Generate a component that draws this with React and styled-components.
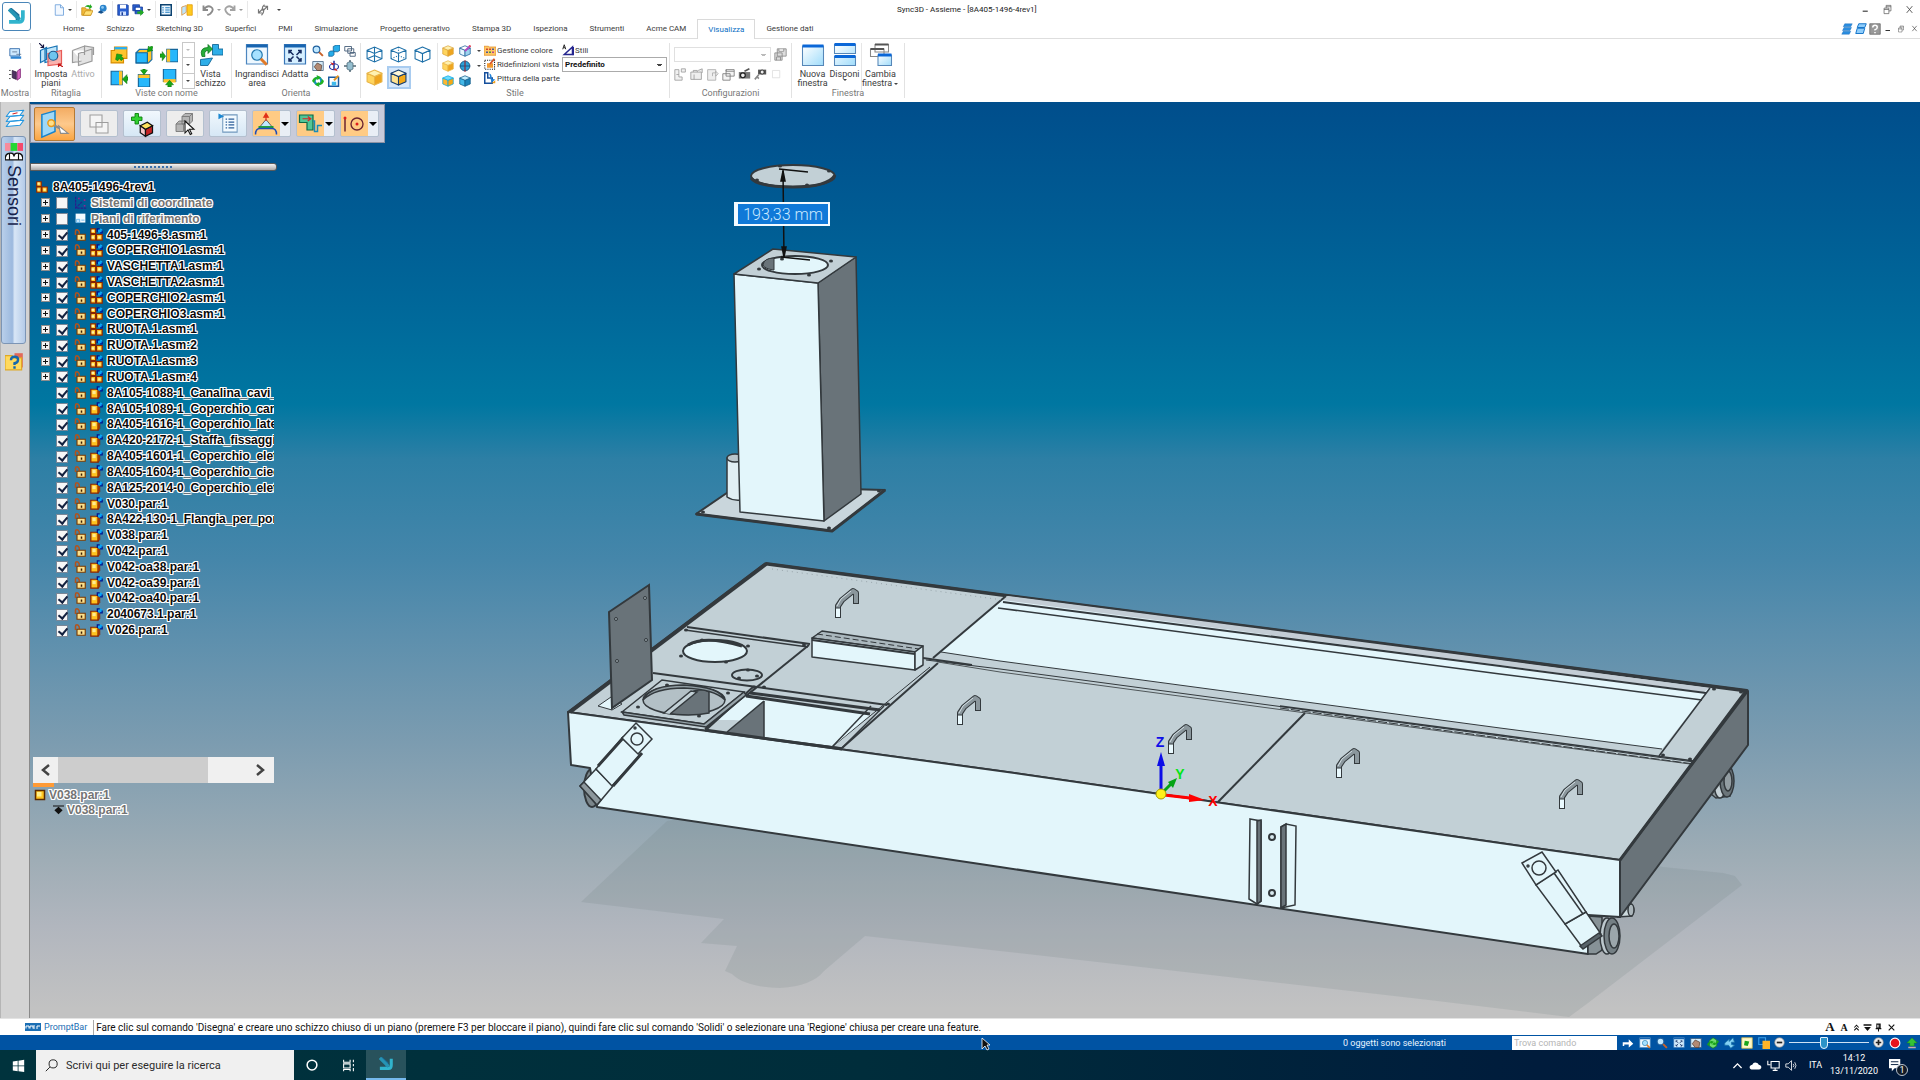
import React, { useState } from 'react';
import styled, { createGlobalStyle, css } from 'styled-components';

const GlobalStyle = createGlobalStyle`
  * {
    box-sizing: border-box;
  }
  body {
    margin: 0;
    font-family: Roboto, 'Open Sans', sans-serif;
    font-size: 9px;
    color: #3b3b3b;
    background: #fff;
  }
  button, input, select {
    font: inherit;
    color: inherit;
  }
  button {
    padding: 0;
    border: 0;
    background: none;
  }
  svg {
    display: block;
    flex: none;
  }
`;

/* ---------- icons ---------- */

const isoCube = (fill, top, side, stroke) => (
  <g stroke={stroke} strokeLinejoin="round">
    <path d="M1 4l7 3v8l-7-3z" fill={fill} />
    <path d="M8 7l7-3v8l-7 3z" fill={side} />
    <path d="M1 4l7-3 7 3-7 3z" fill={top} />
  </g>
);

const lens = (
  <>
    <circle cx="6" cy="6" r="4.500" fill="#bfe7ff" stroke="#1d5f9e" strokeWidth="1.500" />
    <path d="M9.500 9.500l5 5" stroke="#c8622a" strokeWidth="2.500" />
  </>
);

const floppy = (
  <>
    <path d="M1 1h13l1 1v13H1z" fill="#2a5fd0" stroke="#173c96" />
    <path d="M4 1h8v5H4z" fill="#fff" />
    <path d="M4 10h8v5H4z" fill="#cfe0ff" />
    <path d="M6 11h2v4H6z" fill="#173c96" />
  </>
);

const blocks = (
  <>
    <path d="M1 1h6v6H1zM1 8h6v7H1zM8 8h7v7H8z" fill="#ffc629" stroke="#8a2500" strokeWidth="1.500" />
    <path d="M2 2h3v3H2zM2 10h3v3H2zM10 10h3v3h-3z" fill="#fff0a8" />
  </>
);

const blueLink = (
  <>
    <circle cx="12.500" cy="3.500" r="3" fill="#0aa5f5" />
    <path d="M9 5V1h3M15 3v3h-3" fill="none" stroke="#00138c" strokeWidth="1.500" />
  </>
);

const arrow = (d) => <path d={d} fill="#18a818" stroke="#087508" strokeWidth=".5" />;

const ICONS = {
  logo: (
    <g fill="none" strokeWidth="3.500">
      <path d="M2 1l7 6v6" stroke="#1c6c96" />
      <path d="M1 13h10q3 0 3-4V2" stroke="#31b4cd" />
      <path d="M1 1l10 10" stroke="#2694b4" />
    </g>
  ),
  new: <path d="M3 1h7l4 4v10H3zM10 1v4h4" fill="#f2f8ff" stroke="#5c95d6" />,
  open: (
    <>
      <path d="M1 5h5l1 2h6v8H1z" fill="#f0b93a" stroke="#c48a14" />
      <path d="M3 15l3-6h10l-3 6z" fill="#ffdf73" stroke="#c48a14" />
      <path d="M5 4q3-4 7-2V0l3 4-4 3V4.500Q8 3 5 4z" fill="#22aa22" />
    </>
  ),
  pin: (
    <>
      <circle cx="9" cy="6" r="5" fill="#2a83cc" />
      <circle cx="8" cy="5" r="2" fill="#8ac7f2" />
      <path d="M5 9l-4 3 5 2 4-2z" fill="#14508c" />
    </>
  ),
  save: floppy,
  saveAs: (
    <>
      <path d="M1 1h9v8H1zM4 4h10v9H4z" fill="#2a5fd0" stroke="#173c96" />
      <path d="M5 5h6v3H5z" fill="#fff" />
      <path d="M7 10h4V7l5 4-5 5v-3H7z" fill="#22aa22" />
    </>
  ),
  list: (
    <>
      <path d="M1 1h14v14H1z" fill="#eaf6ff" stroke="#0b4270" strokeWidth="2" />
      <path d="M3 5h2M3 8h2M3 11h2M7 5h6M7 8h6M7 11h6" stroke="#1c7bbf" strokeWidth="1.500" />
    </>
  ),
  door: (
    <>
      <path d="M8 1h7v14H8z" fill="#ffca1f" stroke="#e09500" />
      <path d="M1 4l6-2v9l-6 4z" fill="#bfe4fb" stroke="#d98c2d" />
    </>
  ),
  undo: <path d="M2 2v6h6M2 8Q7 1 12 4t-1 9l-4 2" fill="none" stroke="#8b8b8b" strokeWidth="2.500" />,
  redo: <path d="M14 2v6H8M14 8Q9 1 4 4t1 9l4 2" fill="none" stroke="#a3a3a3" strokeWidth="2.500" />,
  refresh: (
    <path
      d="M2 7v5h5M2 12l5-5q2-1 2 2t-3 6M14 8V3H9M14 3L9 8Q7 9 7 6t3-5"
      fill="none"
      stroke="#777"
      strokeWidth="1.600"
    />
  ),
  showA: (
    <>
      <path d="M1 2h12v9H1z" fill="#cce8ff" stroke="#2763a5" />
      <path d="M2 13h13" stroke="#2d84d3" strokeWidth="3" />
      <path d="M4 6h6M9 9h6" stroke="#5b718d" />
    </>
  ),
  showB: (
    <>
      <path d="M4 3l5 2v9l-5-2z" fill="#4e3263" stroke="#33203f" />
      <path d="M10 4l4-3v11l-4 3z" fill="#d763c3" stroke="#7c2274" />
      <path d="M0 3h2M0 8h3M0 13h2" stroke="#333" />
    </>
  ),
  clip: (
    <>
      <path d="M1 5l4-2v8l-4 2zM4 4l8-2v9l-8 2z" fill="#bfe6fb" stroke="#1773b4" strokeWidth=".8" />
      <path d="M6 7l9-2v9l-9 1z" fill="#f8a6a0" fillOpacity=".85" stroke="#e85a56" strokeWidth=".8" />
      <circle cx="9.500" cy="8.500" r="3" fill="#6fc5ee" stroke="#1c5d91" strokeWidth=".8" />
      <path d="M0 0l3 3M3 1v2H1" stroke="#151540" strokeWidth=".8" fill="none" />
      <path d="M16 16l-3-2M13 16v-2h2" stroke="#c01414" strokeWidth=".8" fill="none" />
    </>
  ),
  active: (
    <path
      d="M1 5l8-3v3M1 5v8l6-1M5 7l9-3v8l-9 3zM9 8V2l6 1v5"
      fill="#e3e3e3"
      stroke="#9a9a9a"
      strokeWidth=".8"
    />
  ),
  viewTop: (
    <>
      <path d="M4 1h11v10h-3v4H1V4h3z" fill="#ffc42c" stroke="#d88c00" />
      <path d="M4 1h11v2H4z" fill="#1eafff" />
      {arrow('M5 12l1-5 5 1-1 1 2 2-2 2-2-2-1 2z')}
    </>
  ),
  viewIso: (
    <>
      <path d="M1 6l3-3h11v9l-3 3H1z" fill="#ffc42c" stroke="#1c6fa8" />
      <path d="M1 6h10v9H1z" fill="#26b7fb" stroke="#13659b" />
      {arrow('M11 5l1-5 1 1 2-1 1 1-1 2 1 1z')}
    </>
  ),
  viewLeft: (
    <>
      <path d="M6 3h10v11H6z" fill="#26b7fb" stroke="#13659b" />
      <path d="M6 3h3v11H6z" fill="#ffc42c" />
      {arrow('M0 7h2V5l3 4-3 4v-3H0z')}
    </>
  ),
  viewRight: (
    <>
      <path d="M1 2h10v12H1z" fill="#26b7fb" stroke="#13659b" />
      <path d="M8 2h3v12H8z" fill="#ffc42c" />
      {arrow('M16 7h-1V5l-4 4 4 4v-3h1z')}
    </>
  ),
  viewBack: (
    <>
      <path d="M3 5h10v11H3z" fill="#26b7fb" stroke="#13659b" />
      <path d="M3 5h10v3H3z" fill="#ffc42c" />
      {arrow('M7 0h2v1h2L8 5 5 1h2z')}
    </>
  ),
  viewBottom: (
    <>
      <path d="M3 0h11v11H3z" fill="#26b7fb" stroke="#13659b" />
      <path d="M3 9h11v3H3z" fill="#ffc42c" />
      {arrow('M7 16h3v-2h2l-3.500-4L5 14h2z')}
    </>
  ),
  sketchView: (
    <>
      <path d="M9 1h4v3h3v4H9zM1 11l8-1-3 5H1z" fill="#2eaee8" stroke="#156999" strokeWidth=".6" />
      <path d="M2 9Q0 3 6 3V1l3 3-3 3V5Q3 5 4 9z" fill="#25ae38" stroke="#0a701b" strokeWidth=".5" />
    </>
  ),
  zoomArea: (
    <>
      <path d="M1 1h14v13H1z" fill="#eef8ff" stroke="#4c86bf" strokeWidth=".8" />
      <path d="M1 1h14v2H1z" fill="#1764b0" />
      <circle cx="8" cy="8" r="3.500" fill="#a6e1ff" stroke="#2377ae" strokeWidth=".8" />
      <path d="M10.500 10.500l4 4" stroke="#e17a28" strokeWidth="2" />
    </>
  ),
  fit: (
    <>
      <path d="M1 1h14v13H1z" fill="#d5efff" stroke="#3976b7" strokeWidth=".8" />
      <path d="M1 1h14v2H1z" fill="#1764b0" />
      <path d="M4 7V5h2M10 5h2v2M12 10v2h-2M6 12H4v-2M4 5l3 3M12 5L9 8M4 12l3-3M12 12L9 9" fill="none" stroke="#172d61" />
    </>
  ),
  lens,
  cubes: (
    <>
      <path d="M7 2l4-2h5v7l-3 2H7z" fill="#27adea" stroke="#135c8e" />
      <path d="M1 10l2-2h5v5l-2 2H1z" fill="#27adea" stroke="#135c8e" />
    </>
  ),
  pan: <path d="M1 2h9v6H1zM5 5h8v6H5zM8 10h7v5H8z" fill="#fff" stroke="#47607a" strokeWidth="1.200" />,
  hand: (
    <>
      <path d="M1 2h14v12H1z" fill="#d4ebf8" stroke="#3a5a7a" />
      <path d="M3 9l4-5 6 3-1 7H7z" fill="#b28a73" stroke="#5a4238" />
    </>
  ),
  orbit: (
    <>
      <path d="M8 1v12" stroke="#1b2c9d" strokeWidth="2" />
      <ellipse cx="8" cy="9" rx="6" ry="4" fill="none" stroke="#1b2c9d" strokeWidth="1.500" />
      <path d="M3 3l6 2-3 2zM13 15l-6-2 3-2z" fill="#d62727" />
    </>
  ),
  rotate: (
    <>
      <path d="M4 4l4-2 4 2v8l-4 2-4-2z" fill="#96bfd0" stroke="#4b6877" />
      <path d="M8 0v3M8 13v3M0 8h4M12 8h4" stroke="#526a77" strokeWidth="2" />
    </>
  ),
  spin: (
    <>
      <circle cx="8" cy="8" r="4.500" fill="none" stroke="#1590c0" strokeWidth="3" />
      <path d="M0 8q2-6 7-5L6 0l6 3-5 4v-2Q3 6 3 11zM16 8q-2 6-7 5l1 3-6-3 5-4v2q4-1 4-6z" fill="#20b320" />
    </>
  ),
  edit: (
    <>
      <path d="M1 3h13v12H1z" fill="#fff" stroke="#1a5aa0" strokeWidth="2" />
      <path d="M5 9h6v5H5z" fill="#3fb9eb" />
      <path d="M8 7l6-6" stroke="#e09424" strokeWidth="2.500" />
    </>
  ),
  wire: (
    <g fill="none" stroke="#1c6fa8">
      <path d="M1 4l7-3 7 3v8l-7 3-7-3zM1 4l7 3 7-3M8 7v8M8 1v8M1 12l7-3 7 3" />
    </g>
  ),
  wireDash: (
    <g fill="none" stroke="#1c6fa8">
      <path d="M1 4l7-3 7 3v8l-7 3-7-3zM1 4l7 3 7-3M8 7v8" />
      <path d="M8 1v8M1 12l7-3 7 3" strokeDasharray="1 1.500" />
    </g>
  ),
  hidden: isoCube('#fff', '#fff', '#fff', '#1c6fa8'),
  shaded: isoCube('#ffd55e', '#fff1b0', '#eea51f', '#e8b446'),
  shadedEdge: isoCube('#ffe290', '#fff7d6', '#f5a916', '#123b6e'),
  gold: isoCube('#ffd55e', '#fff1b0', '#eea51f', '#dba43c'),
  goldBlue: isoCube('#ffb62e', '#6bdcff', '#f5a916', '#12a7df'),
  blueCube: isoCube('#43b8e8', '#c4efff', '#1c83ba', '#125b88'),
  paintCube: (
    <>
      {isoCube('#e7f7ff', '#fff', '#9cd3ef', '#1c5f98')}
      <path d="M8 8l7-7" stroke="#b04bc2" strokeWidth="2.500" />
      <path d="M13 1l2-1 1 2-1 1z" fill="#ec4545" />
    </>
  ),
  sphere: (
    <>
      <circle cx="8" cy="8" r="6.500" fill="#2da1d8" stroke="#0d416e" />
      <path d="M8 1v14M1 8h14" stroke="#0d416e" />
      <path d="M8 0v16" stroke="#d82020" />
    </>
  ),
  palette: (
    <>
      <path d="M0 3h6l1 1h9v11H0z" fill="#ffc766" stroke="#e28b22" />
      <path d="M3 6h2v2H3zM7 6h2v2H7z" fill="#c11f1f" />
      <path d="M11 6h2v2h-2zM3 10h2v2H3z" fill="#1434a8" />
      <path d="M7 10h2v2H7z" fill="#0c8a2c" />
      <path d="M11 10h2v2h-2z" fill="#9b1ba5" />
    </>
  ),
  override: (
    <>
      <path d="M1 3h13v12H1z" fill="none" stroke="#222" strokeWidth="1.500" strokeDasharray="1.500 1.500" />
      <path d="M4 7h8v6H4z" fill="#f29a30" />
      <path d="M8 8l6-7" stroke="#d8552a" strokeWidth="2.500" />
    </>
  ),
  paint: (
    <>
      <path d="M1 1h4v7h6v7H1z" fill="#fff" stroke="#154f9c" strokeWidth="2" />
      <path d="M7 2q4 1 3 7l5 1-5 4z" fill="#1e7fd6" />
      <path d="M10 15l5-4v4z" fill="#f0a020" />
    </>
  ),
  styles: (
    <>
      <path d="M1 7l2-6 2 6M2 5h2" fill="none" stroke="#222" strokeWidth="1.300" />
      <path d="M3 14L14 4v10z" fill="#fff" stroke="#26278f" strokeWidth="2" />
      <path d="M15 4v11" stroke="#26278f" strokeWidth="2" />
    </>
  ),
  floppyGrey: <path d="M4 1h11v9H4zM1 6h9v9H1zM6 1v3h6V1M3 15v-4h5v4" fill="#ddd" stroke="#888" />,
  cfg1: <path d="M1 2v13h9v-4H6V2zM9 1h5v4H9zM3 8h3" fill="#f1f1f1" stroke="#9b9b9b" />,
  cfg2: <path d="M1 5h13v9H1zM4 5V3h5v2M10 3l5-2v5M5 8v6" fill="#eee" stroke="#999" />,
  cfg3: <path d="M2 2h10v13H2zM8 10V6h4V4l3 3-3 3V8" fill="#eee" stroke="#aaa" />,
  cfg4: <path d="M5 2h10v8H5zM1 7h9v8H1zM5 2v2h10" fill="#f4f4f4" stroke="#777" />,
  cfg5: (
    <>
      <path d="M1 5h14v8H1z" fill="#777" />
      <circle cx="6" cy="9" r="3" fill="#eee" stroke="#222" strokeWidth="1.500" />
      <path d="M8 4l6-3" stroke="#555" strokeWidth="2" />
    </>
  ),
  cfg6: (
    <>
      <path d="M5 2h10v6H5z" fill="#555" />
      <circle cx="10" cy="5" r="2.500" fill="#eee" stroke="#222" />
      <path d="M6 8l-5 6M4 11l2 2" stroke="#888" strokeWidth="2" />
    </>
  ),
  cfg7: <path d="M3 3h9v9H3z" fill="#fff" stroke="#ddd" />,
  windowNew: (
    <>
      <path d="M1 2h14v13H1z" fill="url(#glass)" stroke="#5687b8" strokeWidth=".7" />
      <path d="M1 1h14v2H1z" fill="#0a67d8" />
    </>
  ),
  windowTile: (
    <>
      <path d="M1 1h14v6H1zM1 9h14v6H1z" fill="url(#glass)" stroke="#5687b8" strokeWidth=".7" />
      <path d="M1 0h14v2H1zM1 8h14v2H1z" fill="#0a67d8" />
    </>
  ),
  windowSwap: (
    <>
      <path d="M4 1h9v5H4zM1 4h9v5H1z" fill="#fff" stroke="#888" strokeWidth=".7" />
      <path d="M4 1h9M1 4h9" stroke="#555" strokeWidth="1.300" />
      <path d="M6 8h9v7H6z" fill="url(#glass)" stroke="#5687b8" strokeWidth=".7" />
      <path d="M6 7h9v2H6z" fill="#0a67d8" />
    </>
  ),
  restore: <path d="M3 6h7v8H3zM6 6V2h7v8h-3M3 8h7M6 4h7" fill="none" stroke="#555" />,
  close: <path d="M3 2l10 12M13 2L3 14" stroke="#444" strokeWidth="1.500" />,
  minimize: <path d="M3 11h9" stroke="#333" strokeWidth="2" />,
  stackA: <path d="M5 1h10l-2 4H3zM4 6h10l-2 4H2zM3 11h10l-2 4H1z" fill="#2a8de0" stroke="#1060b0" strokeWidth=".5" />,
  stackB: <path d="M5 1h10l-2 5H3zM3 7h10l-2 7H1z" fill="#8fcdfb" stroke="#1473c8" strokeWidth="1.300" />,
  help: (
    <>
      <path d="M1 1h14v14H1z" fill="#999" stroke="#666" />
      <path d="M5 6q0-3 3-3t3 2.500T8 9v1M8 12v1.500" fill="none" stroke="#fff" strokeWidth="2" />
    </>
  ),
  layers: (
    <g fill="#fff" stroke="#2196e0" strokeWidth=".9" strokeLinejoin="round">
      <path d="M4 10l11-1-3 4-11 1z" />
      <path d="M4 6l11-1-3 4-11 1z" />
      <path d="M4 2l11-1-3 4-11 1z" />
      <path d="M6 4l4-1" stroke="#d42626" />
    </g>
  ),
  gauge: (
    <>
      <path d="M0 0h5v7H0z" fill="#f78b9c" />
      <path d="M5 0h6v7H5z" fill="#24d832" />
      <path d="M11 0h5v7h-5z" fill="#f44a6c" />
      <path d="M0 15q0-6 5-6 3 0 3 3 0-3 3-3 5 0 5 6z" fill="#fff" stroke="#111" strokeWidth="1.300" />
      <path d="M4 15V9M12 15V9" stroke="#111" />
    </>
  ),
  folderHelp: (
    <>
      <path d="M8 1h7v12H8z" fill="#e26a5a" />
      <path d="M0 3h6l1 2h7v10H0z" fill="#ffd95e" stroke="#dfa924" />
      <path d="M5 7q0-3 3-3t3 2.500T8 9.500V11M8 12v2" fill="none" stroke="#1668ad" strokeWidth="2" />
    </>
  ),
  asmRoot: blocks,
  asm: (
    <>
      {blocks}
      {blueLink}
    </>
  ),
  part: (
    <>
      <path d="M1 4h9v11H1z" fill="#ffc21f" stroke="#8a2500" strokeWidth="1.500" />
      <path d="M10 5l2 2v6l-2 2z" fill="#c45a00" stroke="#8a2500" />
      <path d="M3 6h4v4H3z" fill="#ffeb92" />
      {blueLink}
    </>
  ),
  partOnly: (
    <>
      <path d="M2 2h12v12H2z" fill="#ffc51f" stroke="#5b2b00" strokeWidth="2" />
      <path d="M4 4h6v6H4z" fill="#ffef8a" />
    </>
  ),
  ground: <path d="M0 2h16v1.500H0zM8 4l6 5-6 6-6-6z" fill="#111" />,
  lock: (
    <>
      <path d="M2 8V3Q2 1 4 1t3 3v3" fill="none" stroke="#b5521a" strokeWidth="2" />
      <path d="M4 7h11v8H4z" fill="#fbe08c" stroke="#7a3a00" strokeWidth="1.500" />
      <path d="M9 10h2v3H9z" fill="#3a1a00" />
    </>
  ),
  coords: (
    <>
      <path d="M2 1v14h13M2 15l8-8" fill="none" stroke="#2a1f8c" strokeWidth="1.500" strokeDasharray="3 1" />
      <path d="M5 3h2M12 5h2M12 12h2" stroke="#9b1b8f" strokeWidth="2" />
    </>
  ),
  planes: (
    <>
      <path d="M2 2h12v11H2z" fill="#f5fbff" />
      <path d="M3 9h4v4H3zM9 10h4" stroke="#5fb3ea" fill="#c3e6fd" />
    </>
  ),
  selectPlane: (
    <>
      <path d="M1 3l7-2v11l-7 3z" fill="#9fd8f7" stroke="#1683cc" strokeWidth=".8" />
      <path d="M6 8l6 3" stroke="#8c8c8c" strokeWidth="1.200" />
      <circle cx="6" cy="7.500" r="1.800" fill="#ffe08a" stroke="#e89a1c" strokeWidth=".8" />
      <path d="M10 9l5 4-4 0z" fill="#fff" stroke="#8c8c8c" strokeWidth=".6" />
    </>
  ),
  copySquares: <path d="M2 2h8v8H2zM6 7h8v7H6z" fill="#f5f5f5" stroke="#9d9d9d" strokeWidth=".7" />,
  addCube: (
    <>
      <path d="M2 4h2V2h2v2h2v2H6v2H4V6H2z" fill="#31d131" stroke="#0c7c0c" strokeWidth=".5" />
      <g stroke="#111" strokeWidth=".7">
        <path d="M7 9l3 2v4l-3-2z" fill="#f6c7c7" />
        <path d="M10 11l4-2v4l-4 2z" fill="#c42323" />
        <path d="M7 9l4-2 3 2-4 2z" fill="#ffe25e" />
      </g>
    </>
  ),
  selectTool: (
    <>
      <path d="M2 8h5v5H2zM2 8l2-2h5l-2 2M6 3l2-2h5v5l-2 2H6zM6 3h5v5M11 3l2-2" fill="#b5b5b5" stroke="#777" strokeWidth=".6" />
      <path d="M8 6v8l2-2 1.500 3 1-.5-1.500-3h3z" fill="#fff" stroke="#111" strokeWidth=".7" />
    </>
  ),
  optionList: (
    <>
      <path d="M4 2h10v12H4z" fill="#f2faff" stroke="#7098bd" strokeWidth=".7" />
      <path d="M6 5h1M6 7h1M6 9h1M6 11h1M8 5h4M8 7h4M8 9h4M8 11h4" stroke="#2d5f9a" strokeWidth=".8" />
      <path d="M1 1l4 2-4 2z" fill="#1c88d2" />
    </>
  ),
  intent: (
    <>
      <path d="M8 5L3 11h10z" fill="#bfe8ff" stroke="#555" strokeWidth=".6" />
      <path d="M3 10h10" fill="none" stroke="#109a2c" strokeWidth="1.200" />
      <path d="M1 15q0-4 3-4h8q3 0 3 4" fill="none" stroke="#1d4cb8" />
      <path d="M8 6V2M6.500 3.500L8 1l1.500 2.500z" stroke="#e03018" fill="#e03018" strokeWidth=".8" />
    </>
  ),
  section: (
    <>
      <path d="M1 2h9v10H6V7H1z" fill="#52c596" stroke="#0c6b48" strokeWidth=".8" />
      <path d="M10 6h1v7h2V9h3" fill="none" stroke="#188cba" />
      <path d="M3 4.500h5M6.500 3l2 1.500-2 1.500" stroke="#d82828" strokeWidth=".8" fill="none" />
    </>
  ),
  centre: (
    <>
      <circle cx="10" cy="8" r="4" fill="none" stroke="#6b2430" strokeWidth=".9" />
      <circle cx="10" cy="8" r="1" fill="#e01d1d" />
      <path d="M2 13V4" stroke="#6b2430" />
      <circle cx="2" cy="4" r="1" fill="#e01d1d" />
    </>
  ),
  promptIcon: (
    <>
      <path d="M0 4h16v8H0z" fill="#1a6eb4" />
      <path d="M1 9.500V7h3v2.500M5 9.500V7h3v2.500M9 10V6M12 10V7h3" fill="none" stroke="#fff" strokeWidth="1" />
    </>
  ),
  doubleUp: <path d="M4 8l4-4 4 4M4 13l4-4 4 4" fill="none" stroke="#111" strokeWidth="1.800" />,
  dropBar: <path d="M1 2h14v3H1zM2 7h12l-6 7z" fill="#111" />,
  pushpin: <path d="M5 2h6v7H5zM3 10h10M8 10v5M9 2v7" fill="none" stroke="#111" strokeWidth="1.800" />,
  closeSmall: <path d="M3 3l10 10M13 3L3 13" stroke="#111" strokeWidth="2" />,
  go: <path d="M1 12V7h8V3l6 6-6 5V10H3v2z" fill="#fff" />,
  greenCube: (
    <>
      <path d="M3 5l5-4 5 3v8l-5 3-5-3z" fill="#6fdc6f" stroke="#0d7a1b" />
      <path d="M0 10q2-4 5-3L4 5l5 1-3 4v-2q-3 0-4 4zM16 6q-2 4-5 3l1 2-5-1 3-4v2q3 0 4-4z" fill="#19a319" />
    </>
  ),
  moveCube: <path d="M1 8l6-5v3l5-5 2 6h-4v3l4 1-5 4-3-4-5 0z" fill="#84d0f4" stroke="#1c74a8" />,
  sheet: (
    <>
      <path d="M1 1h14v14H1z" fill="#fff9c8" stroke="#d9b84a" />
      <path d="M4 11l1-6 6 1-2 6z" fill="#1ba51b" />
    </>
  ),
  overlap: (
    <>
      <path d="M1 1h9v9H1z" fill="none" stroke="#3aa0ea" strokeWidth="1.500" />
      <path d="M6 5h10v11H6z" fill="#ffb429" />
    </>
  ),
  minus: (
    <>
      <circle cx="8" cy="8" r="7" fill="#eee" stroke="#888" />
      <path d="M4 8h8" stroke="#222" strokeWidth="2.500" />
    </>
  ),
  plus: (
    <>
      <circle cx="8" cy="8" r="7" fill="#eee" stroke="#888" />
      <path d="M4 8h8M8 4v8" stroke="#222" strokeWidth="2.500" />
    </>
  ),
  record: <circle cx="8" cy="8" r="6.500" fill="#e8141c" stroke="#fff" strokeWidth="1.500" />,
  upload: (
    <>
      <path d="M8 1l7 7h-4v4H5V8H1z" fill="#35c235" stroke="#0f7d1a" strokeWidth=".6" />
      <path d="M3 14h10" stroke="#c9a9a9" strokeWidth="2" />
    </>
  ),
  windows: <path d="M1 3l6-1v6H1zM8 2l7-1v7H8zM1 9h6v6l-6-1zM8 9h7v7l-7-1z" fill="#fff" />,
  search: (
    <g fill="none" stroke="#222" strokeWidth="1.200">
      <circle cx="10" cy="6" r="5" />
      <path d="M6 10l-5 5" />
    </g>
  ),
  cortana: <circle cx="8" cy="8" r="6.500" fill="none" stroke="#fff" strokeWidth="2" />,
  taskView: <path d="M2 1v3h8V1M2 6h8v5H2zM2 15v-2h8v2M14 1v3M14 6v3M14 11v4" fill="none" stroke="#fff" strokeWidth="1.300" />,
  chevronUp: <path d="M3 11l5-5 5 5" fill="none" stroke="#fff" strokeWidth="1.600" />,
  cloud: <path d="M3 13q-3-1-2-4 1-2 3-2 2-4 6-2 1 0 2 2 4 1 3 4-1 2-3 2z" fill="#fff" />,
  network: <path d="M5 3h10v8H5zM10 11v3M7 14h6M1 2v5h3" fill="none" stroke="#fff" strokeWidth="1.300" />,
  speaker: <path d="M1 6h3l4-4v12L4 10H1zM10 6q2 2 0 4M12 4q3 4 0 8" fill="none" stroke="#fff" />,
  notes: (
    <>
      <path d="M0 1h12v10H6l-3 3v-3H0z" fill="#fff" />
      <path d="M2 4h8M2 7h8" stroke="#01193a" />
    </>
  ),
};

const Icon = ({ name, size = 12 }) => (
  <svg width={size} height={size} viewBox="0 0 16 16" aria-hidden="true">
    {ICONS[name]}
  </svg>
);

/* ---------- header ---------- */

const Page = styled.div`
  position: relative;
  min-height: 100vh;
  display: flex;
  flex-direction: column;
`;

const Gradients = styled.svg`
  position: absolute;
  width: 0;
  height: 0;
`;

const Header = styled.header`
  display: grid;
  grid-template-columns: 52px 1fr auto;
  grid-template-rows: 19px 19px;
  border-bottom: 1px solid #dedede;
`;

const AppButton = styled.button`
  grid-row: 1 / 3;
  align-self: start;
  width: 29px;
  height: 29px;
  margin: 2px;
  display: flex;
  align-items: center;
  justify-content: center;
  border: 1px solid #4a86b8;
  border-radius: 3px;
  background: #fff;
`;

const TitleRow = styled.div`
  display: grid;
  grid-template-columns: 845px 1fr;
  align-items: center;
`;

const QuickAccess = styled.div`
  display: flex;
  align-items: center;
  gap: 1px;
`;

const ToolButton = styled.button`
  display: flex;
  align-items: center;
  justify-content: center;
  width: ${({ $w }) => $w || 13}px;
  height: 15px;
`;

const Caret = styled.span`
  width: 0;
  height: 0;
  margin: 0 1px;
  border: ${({ $size }) => $size || 2}px solid transparent;
  border-top-color: ${({ $color }) => $color || '#444'};
  border-bottom: 0;
`;

const QuickDivider = styled.span`
  width: 1px;
  height: 17px;
  margin: 0 2px;
  background: #e8e8e8;
`;

const Title = styled.h1`
  margin: 0;
  font-size: 8px;
  font-weight: 400;
  line-height: 19px;
  color: #222;
`;

const WindowButtons = styled.div`
  display: flex;
  align-items: center;
  justify-content: flex-end;
  gap: ${({ $gap }) => $gap}px;
  padding-right: ${({ $end }) => $end}px;
`;

const Tabs = styled.nav`
  display: flex;
`;

const Tab = styled.button`
  height: 19px;
  padding: 0 10px;
  font-size: 8px;
  line-height: 18px;
  white-space: nowrap;
  border: 1px solid transparent;
  border-bottom: 0;
  ${({ $active }) =>
    $active &&
    css`
      color: #0c6fc4;
      background: #fff;
      border-color: #dadada;
      margin-bottom: -1px;
      height: 20px;
    `}
`;

/* ---------- ribbon ---------- */

const Ribbon = styled.div`
  display: flex;
  height: 63px;
  padding-top: 2px;
  background: #fff;
`;

const Group = styled.section`
  width: ${({ $w }) => $w}px;
  height: 55px;
  margin-top: 2px;
  display: flex;
  flex-direction: column;
  justify-content: space-between;
  border-right: 1px solid #e2e2e2;
`;

const GroupBody = styled.div`
  display: flex;
  justify-content: center;
  height: 46px;
  gap: ${({ $gap }) => $gap || 0}px;
`;

const GroupName = styled.h2`
  margin: 0;
  font-size: 9px;
  font-weight: 400;
  line-height: 9px;
  text-align: center;
  color: #777;
  white-space: nowrap;
`;

const BigButton = styled.button`
  width: ${({ $w }) => $w || 36}px;
  display: flex;
  flex-direction: column;
  align-items: center;
  justify-content: flex-start;
  gap: 3px;
  line-height: 9px;
  color: ${({ disabled }) => (disabled ? '#aaa' : '#3b3b3b')};
`;

const BigLabel = styled.span`
  display: flex;
  flex-direction: column;
  align-items: center;
  white-space: nowrap;
`;

const LastLine = styled.span`
  display: flex;
  align-items: center;
  gap: 1px;
`;

const IconGrid = styled.div`
  display: grid;
  grid-template-columns: repeat(${({ $cols }) => $cols}, ${({ $cell }) => $cell}px);
  grid-auto-rows: ${({ $row }) => $row}px;
  align-content: start;
  align-items: stretch;
`;

const CaretCell = styled.button`
  display: flex;
  align-items: center;
`;

const CellButton = styled.button`
  display: flex;
  align-items: center;
  justify-content: center;
  ${({ $on }) =>
    $on &&
    css`
      border: 2px solid #a9ccf0;
      background: #d7e8fa;
    `}
`;

const Spinner = styled.div`
  display: flex;
  flex-direction: column;
  width: 13px;
  height: 46px;

  button {
    flex: 1;
    display: flex;
    align-items: center;
    justify-content: center;
    border: 1px solid #c8c8c8;
    margin-top: -1px;
  }
`;

const InnerDivider = styled.span`
  width: 1px;
  height: 47px;
  background: #e6e6e6;
`;

const CommandList = styled.div`
  display: flex;
  flex-direction: column;
`;

const Command = styled.button`
  display: flex;
  align-items: center;
  gap: 1px;
  height: 14px;
  font-size: 8px;
  white-space: nowrap;
`;

const SelectBox = styled.select`
  width: ${({ $w }) => $w}px;
  height: 15px;
  padding: 0 2px;
  border: 1px solid ${({ disabled }) => (disabled ? '#e0e0e0' : '#ababab')};
  border-radius: 0;
  appearance: none;
  color: #111;
  font-size: 8px;
  font-weight: 700;
  background: ${({ disabled }) => {
    const c = disabled ? '#bbb' : '#444';
    return `linear-gradient(${c}, ${c}) right 4px top 6px / 5px 1px no-repeat,
      linear-gradient(${c}, ${c}) right 5px top 7px / 3px 1px no-repeat, #fff`;
  }};
  opacity: 1;
`;

const ConfigRow = styled.div`
  display: flex;
  align-items: center;
  gap: 3px;
  margin-top: ${({ $top }) => $top}px;
`;

/* ---------- viewport ---------- */

const Work = styled.main`
  flex: 1;
  display: flex;
`;

const Rail = styled.aside`
  width: 30px;
  border-right: 1px solid #8a8a8a;
  border-left: 1px solid #b5b5b5;
  background: #d3d3d3;
  display: flex;
  flex-direction: column;
  align-items: flex-start;
`;

const RailButton = styled.button`
  width: 27px;
  height: 34px;
  display: flex;
  align-items: center;
  justify-content: center;
`;

const SensorTab = styled.button`
  width: 25px;
  height: 208px;
  padding: 6px 0;
  display: flex;
  flex-direction: column;
  align-items: center;
  gap: 4px;
  border: 1px solid #7c95b5;
  border-radius: 3px;
  background: linear-gradient(90deg, #b9cfea, #9cb9de 45%, #d8e6f6 55%, #b4cbe8);

  span {
    writing-mode: vertical-rl;
    font: 18px 'Liberation Sans', sans-serif;
    line-height: 20px;
    color: #16234c;
  }
`;

const Viewport = styled.div`
  flex: 1;
  position: relative;
  overflow: hidden;
  background: linear-gradient(
    #004e8c 0%,
    #005b93 12%,
    #006a9b 24%,
    #0077a1 33%,
    #2d7fa5 39%,
    #4586aa 50%,
    #5c8fad 58%,
    #7c9cb0 70%,
    #9dacb5 82%,
    #b1b6be 90%,
    #c2c2c2 99%
  );
`;

const Scene = styled.svg`
  position: absolute;
  inset: 0;
  width: 100%;
  height: 100%;
`;

const DimensionInput = styled.input`
  position: absolute;
  left: 704px;
  top: 100px;
  width: 96px;
  height: 24px;
  border: 2px solid #f4fbff;
  border-left-width: 4px;
  padding: 0;
  background: #1079d8;
  color: #cbe9ff;
  text-align: center;
  font: 300 16px Roboto, sans-serif;
`;

const EdgePanel = styled.div`
  position: relative;
  width: max-content;
`;

const FloatBar = styled.div`
  display: flex;
  align-items: center;
  gap: 5px;
  height: 39px;
  padding: 0 5px 0 3px;
  margin-top: 2px;
  border: 1px solid #8d93a5;
  background: #c8cbda;
`;

const FloatButton = styled.button`
  width: ${({ $on }) => ($on ? 41 : 38)}px;
  height: ${({ $on }) => ($on ? 34 : 27)}px;
  display: flex;
  align-items: center;
  justify-content: center;
  border: 1px solid ${({ $on }) => ($on ? '#b57a35' : '#b4c0cf')};
  border-radius: 2px;
  background: ${({ $on, $grey }) =>
    $on ? 'linear-gradient(#f3ac63, #fdc98c 50%, #fba543)' : $grey ? '#ededed' : 'linear-gradient(#f1f8fd, #d6e7f5)'};
`;

const SplitButton = styled(FloatButton)`
  width: 39px;
  justify-content: space-between;
  background: linear-gradient(90deg, #ffcb84 0 27px, #e9eef5 27px);
  padding-left: 1px;
`;

const Splitter = styled.div`
  width: 247px;
  height: 8px;
  margin-top: 20px;
  display: flex;
  align-items: center;
  justify-content: center;
  border: 1px solid #5b5b5b;
  border-radius: 0 3px 3px 0;
  background: linear-gradient(#f5f5f5, #a9a9a9);

  span {
    width: 40px;
    height: 2px;
    background: repeating-linear-gradient(90deg, #3b6fa9 0 2px, transparent 2px 4px);
  }
`;

const Root = styled.div`
  display: flex;
  align-items: center;
  gap: 5px;
  height: 16px;
  margin-top: 8px;
  padding-left: 6px;
`;

const NodeName = styled.span`
  font-family: 'Liberation Sans', Arial, sans-serif;
  font-size: 12px;
  font-weight: 700;
  line-height: 14px;
  white-space: nowrap;
  color: ${({ $dim }) => ($dim ? '#747474' : '#0a0a0a')};
  text-shadow: 1px 0 #fff, -1px 0 #fff, 0 1px #fff, 0 -1px #fff, 1px 1px #fff, -1px -1px #fff,
    1px -1px #fff, -1px 1px #fff;
`;

const Tree = styled.ul`
  list-style: none;
  margin: 0;
  padding: 0 0 0 11px;
  width: 244px;
  height: 443px;
  overflow: hidden;
  display: grid;
  grid-auto-rows: 1fr;
`;

const Node = styled.li`
  display: grid;
  grid-template-columns: 15px 18px 16px auto;
  align-items: center;
  justify-content: start;

  label {
    display: flex;
    align-items: center;
    gap: 4px;
  }
`;

const Expander = styled.button`
  width: 9px;
  height: 9px;
  border: 1px solid #8d8d8d;
  background: linear-gradient(#111, #111) center / 5px 1px no-repeat,
    linear-gradient(#111, #111) center / 1px 5px no-repeat, #f3f3f3;
`;

const Tick = styled.input`
  appearance: none;
  grid-column: 2;
  width: 12px;
  height: 12px;
  margin: 1px 0 0;
  border: 1px solid #7a8797;
  background: #f7f7f7;

  &:checked::after {
    content: '';
    display: block;
    width: 4px;
    height: 7px;
    margin: 0 3px;
    border: solid #14213f;
    border-width: 0 2px 2px 0;
    transform: rotate(40deg);
  }
`;

const ScrollTrack = styled.div`
  width: 241px;
  height: 26px;
  margin: 119px 0 0 3px;
  display: grid;
  grid-template-columns: 25px 150px 1fr 28px;
  background: #f0f0f0;

  button {
    display: flex;
    align-items: center;
    justify-content: center;
  }
`;

const ScrollThumb = styled.span`
  background: #cdcdcd;
`;

const OrangeMark = styled.div`
  width: 21px;
  height: 4px;
  margin-left: 3px;
  background: #ff9b36;
`;

const SubRow = styled.div`
  display: flex;
  align-items: center;
  gap: 3px;
  height: 15px;
  padding-left: ${({ $indent }) => $indent}px;
`;

/* ---------- bottom bars ---------- */

const PromptBar = styled.div`
  display: flex;
  align-items: center;
  height: 17px;
  padding: 0 23px 0 25px;
  background: #fff;
  border-top: 1px solid #e3e3e3;
  color: #111;
`;

const PromptName = styled.span`
  margin: 0 6px 0 3px;
  color: #1a6eb4;
`;

const PromptText = styled.p`
  flex: 1;
  margin: 0;
  padding-left: 2px;
  border-left: 1px solid #a9a9a9;
  font-size: 10px;
  line-height: 15px;
`;

const PromptTools = styled.div`
  display: flex;
  align-items: center;
  gap: 2px;
`;

const FontButton = styled.button`
  width: 12px;
  font: 700 ${({ $size }) => $size}px 'Liberation Serif', serif;
`;

const StatusBar = styled.div`
  display: flex;
  align-items: center;
  justify-content: flex-end;
  height: 15px;
  padding-right: 2px;
  background: #0053a3;
  color: #eaf3ff;
  gap: 4px;
`;

const Selected = styled.span`
  width: 165px;
`;

const FindInput = styled.input`
  width: 105px;
  height: 14px;
  padding: 0 2px;
  border: 0;
  background: #fff;

  &::placeholder {
    color: #b5b5b5;
  }
`;

const ZoomRange = styled.input`
  width: 80px;
  height: 13px;
  margin: 0;
  appearance: none;
  background: linear-gradient(#cfe2f5, #cfe2f5) center / 100% 1px no-repeat;

  &::-webkit-slider-thumb {
    appearance: none;
    width: 8px;
    height: 12px;
    border: 1px solid #e5f4ff;
    border-radius: 1px 1px 4px 4px;
    background: #2b93c8;
  }
`;

const Taskbar = styled.footer`
  display: flex;
  align-items: center;
  height: 30px;
  color: #fff;
  background: linear-gradient(90deg, #00333d, #002d3b 45%, #001c3c 80%, #001a3e);
`;

const TaskButton = styled.button`
  width: ${({ $on }) => ($on ? 40 : 36)}px;
  height: 30px;
  display: flex;
  align-items: center;
  justify-content: center;
  background: ${({ $on }) => ($on ? '#28525c' : 'none')};
  border-bottom: ${({ $on }) => ($on ? '2px solid #76b9ed' : '0')};
`;

const TaskSearch = styled.label`
  width: 258px;
  height: 30px;
  display: flex;
  align-items: center;
  gap: 8px;
  padding: 0 9px;
  background: #f0f0f0;

  input {
    flex: 1;
    min-width: 0;
    border: 0;
    padding: 0;
    background: none;
    font-size: 11px;
  }
  input::placeholder {
    color: #2b2b2b;
    opacity: 1;
  }
`;

const Tray = styled.div`
  margin-left: auto;
  display: flex;
  align-items: center;
  gap: 5px;
  padding-right: 14px;
`;

const Language = styled.span`
  width: 16px;
  margin-left: 6px;
`;

const Clock = styled.time`
  width: 48px;
  margin-right: 6px;
  text-align: center;
  line-height: 13px;
`;

const NoteButton = styled.button`
  position: relative;
  width: 17px;
  height: 17px;
`;

const Badge = styled.span`
  position: absolute;
  right: -2px;
  bottom: -2px;
  width: 12px;
  height: 12px;
  border: 1px solid #b8c2cf;
  border-radius: 50%;
  background: #111a26;
  line-height: 10px;
  color: #fff;
`;

const Pointer = styled.svg`
  position: absolute;
  left: 981px;
  bottom: 29px;
`;

/* ---------- data ---------- */

const TABS = [
  'Home', 'Schizzo', 'Sketching 3D', 'Superfici', 'PMI', 'Simulazione', 'Progetto generativo',
  'Stampa 3D', 'Ispeziona', 'Strumenti', 'Acme CAM', 'Visualizza', 'Gestione dati',
];

const ASSEMBLIES = [
  '405-1496-3.asm:1', 'COPERCHIO1.asm:1', 'VASCHETTA1.asm:1', 'VASCHETTA2.asm:1', 'COPERCHIO2.asm:1',
  'COPERCHIO3.asm:1', 'RUOTA.1.asm:1', 'RUOTA.1.asm:2', 'RUOTA.1.asm:3', 'RUOTA.1.asm:4',
];

const PARTS = [
  '8A105-1088-1_Canalina_cavi_', '8A105-1089-1_Coperchio_can', '8A405-1616-1_Coperchio_late',
  '8A420-2172-1_Staffa_fissaggi', '8A405-1601-1_Coperchio_elet', '8A405-1604-1_Coperchio_ciec',
  '8A125-2014-0_Coperchio_elet', 'V030.par:1', '8A422-130-1_Flangia_per_por', 'V038.par:1', 'V042.par:1',
  'V042-oa38.par:1', 'V042-oa39.par:1', 'V042-oa40.par:1', '2040673.1.par:1', 'V026.par:1',
];

const NODES = [
  { name: 'Sistemi di coordinate', icon: 'coords', ref: true, open: true },
  { name: 'Piani di riferimento', icon: 'planes', ref: true, open: true },
  ...ASSEMBLIES.map((name) => ({ name, icon: 'asm', open: true })),
  ...PARTS.map((name) => ({ name, icon: 'part' })),
];

/* ---------- model ---------- */

const TOP = '#c2d0d6';
const LIGHT = '#e3f6fb';
const DARK = '#697379';
const EDGE = '#33393d';

const Handle = ({ x, y }) => (
  <g transform={`translate(${x} ${y})`} fill="none" strokeLinejoin="round">
    <path d="M0 0V-12L4 -18L15 -27L18 -25V-14" stroke={EDGE} strokeWidth="6" />
    <path d="M0 -1V-12L4 -18L15 -27L18 -25V-15" stroke="#8b979d" strokeWidth="4" />
    <path d="M0 -1V-10" stroke="#eafaff" strokeWidth="4" />
    <path d="M-1 -12L3 -19L13 -27" stroke="#d3dfe4" strokeWidth="1" />
    <path d="M-2 -10H2" stroke={EDGE} />
  </g>
);

const Bolt = ({ x, y }) => <ellipse cx={x} cy={y} rx="2" ry="1.500" fill={EDGE} />;

const Model = () => (
  <Scene viewBox="30 102 1890 916" preserveAspectRatio="xMidYMid slice">
    {/* floor shadow */}
    <path
      d="M667 821L581 902L724 919L701 943L737 946L725 971L732 974Q745 987 780 988Q812 986 824 971L865 936L1080 960L1429 1000L1569 1017L1588 1003L1742 885L1735 876L1723 873L1663 867L1300 780L900 780Z"
      fill="#697c7c"
      fillOpacity=".17"
    />

    {/* rear wheel, front wheel and peg */}
    <g stroke={EDGE} strokeWidth="1.500">
      <path d="M1706 790L1730 764V796L1716 798Z" fill="#8a9499" />
      <ellipse cx="1720" cy="784" rx="6" ry="14" fill="#c5d0d5" />
      <ellipse cx="1727" cy="781" rx="7" ry="16" fill="#6b757a" />
      <ellipse cx="1728" cy="781" rx="4" ry="10" fill="#939da2" />
      <path d="M1618 909L1631 904Q1636 910 1632 916L1618 917Z" fill="#cddade" />
      <ellipse cx="1631" cy="910" rx="3" ry="6" fill="#aab5ba" />
    </g>

    {/* left corner wheel */}
    <ellipse cx="592" cy="788" rx="8" ry="19" fill="#7b868b" stroke={EDGE} strokeWidth="2" />

    {/* box faces */}
    <g stroke={EDGE} strokeWidth="2" strokeLinejoin="round">
      <path d="M568 712L766 563L1000 594L1500 658L1747 690L1620 860L1500 843L1000 771Z" fill={TOP} />
      <path d="M1620 860L1748 691V745L1620 917Z" fill={DARK} />
      <path d="M568 712L1000 771L1500 843L1620 860V917L1588 915V954L1000 867L597 807L590 768L571 765Z" fill={LIGHT} />
    </g>
    <path d="M570 712L766 564" fill="none" stroke={EDGE} strokeWidth="4" />
    <path d="M766 564L1000 595L1500 659L1746 691L1620 860" fill="none" stroke={EDGE} strokeWidth="3" />

    {/* big tank */}
    <path d="M1005 596L1500 661L1709 689L1662 749L1500 728L1000 661L941 652Z" fill={LIGHT} />
    <path d="M1008 596L1500 660L1709 688L1704 692L1500 665L1002 600Z" fill="#c3cdd5" />
    <g fill="none" stroke={EDGE} strokeWidth="2">
      <path d="M1003 602L1500 666L1706 693" />
      <path d="M998 608L1500 674L1702 700" strokeWidth="1.500" />
      <path d="M1006 596L933 658" />
      <path d="M941 652L1000 661L1500 728L1662 749" strokeWidth="1" />
      <path d="M926 660L1000 669L1500 736L1694 762" strokeWidth="1" />
      <path d="M938 662L1000 672L1500 739L1690 764" strokeWidth="1" stroke="#4f5659" />
      <path d="M1280 706L1500 735L1694 761" strokeWidth="1.500" />
      <path d="M1280 708L1500 738L1694 764" strokeWidth="1" strokeDasharray="9 2" />
      <path d="M1710 688L1659 756" strokeWidth="1.500" />
    </g>
    <Bolt x="1714" y="689" />
    <Bolt x="1741" y="692" />
    <Bolt x="1663" y="755" />
    <Bolt x="1690" y="759" />

    {/* covers */}
    <g fill="none" stroke={EDGE} strokeWidth="2">
      <path d="M687 627L810 644" />
      <path d="M685 630L808 647" strokeWidth="1.500" />
      <path d="M923 658L972 665" />
      <path d="M809 645L705 729" />
      <path d="M938 663L842 748" />
      <path d="M930 667L832 747" strokeWidth="1" />
      <path d="M1305 713L1218 802" />
      <path d="M653 673L757 687L887 705" />
      <path d="M750 693L880 710" strokeWidth="3" />
      <path d="M772 569L1003 600" strokeWidth="1" stroke="#98a5ab" strokeDasharray="1 4" />
    </g>

    {/* compartment opening */}
    <path d="M746 696L871 714L832 747L707 729Z" fill={LIGHT} />
    <path d="M734 720L748 721L727 732L707 729L716 720Z" fill={TOP} />
    <path d="M764 701V739L727 732Z" fill={DARK} />
    <g fill="none" stroke={EDGE} strokeWidth="1.500">
      <path d="M764 701V738L842 748" />
      <path d="M764 701L727 732" />
      <path d="M746 696L870 714" strokeWidth="3" />
      <path d="M753 687L707 729" strokeWidth="2" />
      <path d="M871 706L832 747" />
      <path d="M884 706L842 748" />
      <path d="M705 730L842 749" strokeWidth="3" />
    </g>

    {/* round openings */}
    <ellipse cx="715" cy="651" rx="32" ry="11" fill={LIGHT} stroke={EDGE} strokeWidth="2" />
    <path d="M688 645Q705 635 742 646" fill="none" stroke={EDGE} strokeWidth="3" />
    <ellipse cx="747" cy="675" rx="15" ry="5.500" fill={TOP} stroke={EDGE} strokeWidth="2" />
    {[[686, 630], [804, 645], [702, 640], [748, 646], [681, 656], [726, 662], [739, 678], [757, 676], [748, 670], [754, 687], [764, 687], [888, 704]].map(
      ([x, y]) => (
        <Bolt key={`${x}-${y}`} x={x} y={y} />
      ),
    )}
    <g stroke={EDGE} strokeWidth="1.500">
      <path d="M622 712L662 680L744 692L704 724Z" fill={TOP} />
      <path d="M622 712L704 724L744 692L746 695L706 727L624 715Z" fill="#98a5ab" />
      <ellipse cx="684" cy="700" rx="41" ry="14.500" fill="#b3c0c6" />
      <path d="M664 713L694 691Q705 688 709 692V713Q690 717 664 713Z" fill={DARK} />
      <path d="M664 713L691 691L697 692L670 714" fill="#c2d0d6" />
      <path d="M643 700Q650 685 684 685Q720 687 725 700Q714 689 684 688Q655 688 643 700Z" fill="#8f9ca2" />
    </g>
    <Bolt x="667" y="685" />
    <Bolt x="728" y="693" />
    <Bolt x="638" y="707" />
    <Bolt x="699" y="716" />

    {/* upright plate */}
    <path d="M598 706L611 697L622 704L612 710Z" fill={LIGHT} stroke={EDGE} />
    <path d="M609 612L649 585L652 680L612 708Z" fill={DARK} stroke={EDGE} strokeWidth="2" />
    {[[645, 598], [616, 619], [646, 640], [617, 661]].map(([x, y]) => (
      <circle key={`${x}-${y}`} cx={x} cy={y} r="1.500" fill="#9aa5aa" stroke={EDGE} />
    ))}

    {/* cable duct */}
    <g stroke={EDGE} strokeWidth="1.500" strokeLinejoin="round">
      <path d="M812 638L822 631L923 646L915 652Z" fill="#aab7bd" />
      <path d="M812 638L915 652V670L812 657Z" fill={LIGHT} />
      <path d="M915 652L923 646V665L915 670Z" fill="#d8e9ef" />
      <path d="M817 634L919 649" fill="none" strokeWidth="1" strokeDasharray="6 3" />
      <path d="M812 640L915 654" fill="none" strokeWidth="2" />
    </g>

    <Handle x={838} y={618} />
    <Handle x={960} y={725} />
    <Handle x={1171} y={754} />
    <Handle x={1339} y={778} />
    <Handle x={1562} y={809} />

    {/* left foot */}
    <g stroke={EDGE} strokeWidth="1.500" fill={LIGHT}>
      <path d="M596 769L580 786L597 805L613 786Z" />
      <path d="M580 786L597 805L601 800L584 782Z" fill="#8c979c" />
      <path d="M622 738L640 755L612 786L596 769Z" />
      <path d="M624 737L598 766M642 753L613 786" strokeWidth="3" />
      <path d="M636 723L652 739L638 754L622 738Z" />
      <circle cx="637" cy="739" r="6" />
      <circle cx="635" cy="728" r="1" />
    </g>

    {/* right foot and wheel */}
    <g stroke={EDGE} strokeWidth="1.500" fill={LIGHT}>
      <path d="M1588 916L1602 917V950L1596 954H1588Z" fill="#879297" />
      <ellipse cx="1607" cy="936" rx="7" ry="18" fill="#bcc8cd" />
      <ellipse cx="1612" cy="936" rx="8" ry="18" fill="#747f84" />
      <ellipse cx="1614" cy="936" rx="5" ry="12" fill="#9ba6ab" />
      <path d="M1565 924L1586 912L1601 934L1582 947Z" />
      <path d="M1580 946L1599 933L1602 936L1583 949Z" fill="#59646a" />
      <path d="M1536 885L1558 870L1586 912L1565 924Z" />
      <path d="M1554 873L1583 914" />
      <path d="M1522 863L1542 852L1556 872L1536 885Z" />
      <circle cx="1539" cy="868" r="7" />
      <circle cx="1528" cy="866" r="1" />
    </g>

    {/* centre brackets */}
    <g stroke={EDGE} strokeWidth="1.500">
      <path d="M1250 819L1261 821V901L1257 904L1249 899Z" fill={LIGHT} />
      <path d="M1257 821L1261 820V901L1257 904Z" fill={DARK} />
      <path d="M1281 827L1286 824L1296 826L1295 905L1281 908Z" fill={LIGHT} />
      <path d="M1281 827L1286 824V905L1281 908Z" fill={DARK} />
      <circle cx="1272" cy="837" r="3" fill="#d8e9ef" strokeWidth="2" />
      <circle cx="1272" cy="893" r="3" fill="#d8e9ef" strokeWidth="2" />
    </g>

    {/* tower */}
    <g stroke={EDGE} strokeWidth="2" strokeLinejoin="round">
      <path d="M696 514L737 486L885 490L832 531Z" fill="#c9d6dc" />
      <path d="M696 514L832 531L885 490" fill="none" strokeWidth="3" />
      <path d="M727 458V497Q733 501 741 500V455Z" fill="#e1eff4" strokeWidth="1.500" />
      <ellipse cx="735" cy="458" rx="8" ry="4" fill="#b9c6cc" strokeWidth="1.500" />
      <path d="M818 283L856 257L861 494L824 521Z" fill={DARK} strokeWidth="1.500" />
      <path d="M734 274L818 283L824 521L740 512Z" fill={LIGHT} strokeWidth="1.500" />
      <path d="M734 274L773 249L856 257L818 283Z" fill={TOP} strokeWidth="1.500" />
      <ellipse cx="795" cy="265" rx="33" ry="9" fill={LIGHT} />
      <path d="M763 265Q764 258 774 258V270Q765 269 763 265Z" fill={DARK} strokeWidth="1" />
    </g>
    <Bolt x="759" y="269" />
    <Bolt x="809" y="275" />
    <Bolt x="831" y="261" />
    <Bolt x="782" y="259" />
    <Bolt x="703" y="512" />
    <Bolt x="829" y="528" />
    <Bolt x="879" y="491" />
    <ellipse cx="793" cy="176" rx="42" ry="11" fill={TOP} stroke={EDGE} strokeWidth="2" />
    <path d="M751 178Q758 187 793 187Q828 187 835 175" fill="none" stroke={EDGE} strokeWidth="3" />
    <Bolt x="757" y="180" />
    <Bolt x="807" y="185" />
    <Bolt x="829" y="171" />
    <Bolt x="780" y="166" />

    {/* distance dimension */}
    <g stroke="#111" strokeWidth="1.500" fill="#111">
      <path d="M779 169L808 172M783 170L784 258M781 257L810 260" />
      <path d="M783 171L781 181H785ZM784 257L782 247H786Z" />
    </g>

    {/* origin triad */}
    <g fontFamily="Liberation Sans, sans-serif" fontSize="14" fontWeight="700" textAnchor="middle">
      <path d="M1161 794V764" stroke="#0d0de8" strokeWidth="3" />
      <path d="M1161 752L1165 766H1157Z" fill="#0d0de8" />
      <text x="1160" y="747" fill="#0d0de8">Z</text>
      <path d="M1163 792L1171 784" stroke="#05a316" strokeWidth="3" />
      <path d="M1177 778L1173 788L1168 782Z" fill="#05a316" />
      <text x="1180" y="779" fill="#05e516">Y</text>
      <path d="M1164 795L1190 798" stroke="#f00" strokeWidth="3" />
      <path d="M1205 800L1189 802V794Z" fill="#f00" />
      <text x="1213" y="806" fill="#f00">X</text>
      <circle cx="1161" cy="794" r="5" fill="#fff01a" stroke="#a79a00" />
    </g>
  </Scene>
);

/* ---------- sections ---------- */

const Tool = ({ name, label, size = 12, w }) => (
  <ToolButton aria-label={label || name} $w={w}>
    <Icon name={name} size={size} />
  </ToolButton>
);

const Big = ({ name, lines, w, size = 24, disabled, caret, endCaret }) => (
  <BigButton $w={w} disabled={disabled}>
    <Icon name={name} size={size} />
    <BigLabel>
      {lines.map((line, i) => (
        <LastLine key={line}>
          {line}
          {endCaret && i === lines.length - 1 && <Caret />}
        </LastLine>
      ))}
      {caret && <Caret />}
    </BigLabel>
  </BigButton>
);

const Cells = ({ names, on, size }) =>
  names.map((name) => (
    <CellButton key={name} aria-label={name} $on={name === on}>
      <Icon name={name} size={size} />
    </CellButton>
  ));

const RibbonBar = () => (
  <Ribbon>
    <Group $w={31}>
      <GroupBody>
        <IconGrid $cols={1} $cell={16} $row={21}>
          <Cells names={['showA', 'showB']} size={13} />
        </IconGrid>
      </GroupBody>
      <GroupName>Mostra</GroupName>
    </Group>
    <Group $w={71}>
      <GroupBody>
        <Big name="clip" lines={['Imposta', 'piani']} w={34} />
        <Big name="active" lines={['Attivo']} w={30} disabled />
      </GroupBody>
      <GroupName>Ritaglia</GroupName>
    </Group>
    <Group $w={130}>
      <GroupBody>
        <IconGrid $cols={3} $cell={25} $row={23}>
          <Cells names={['viewTop', 'viewIso', 'viewLeft', 'viewRight', 'viewBack', 'viewBottom']} size={18} />
        </IconGrid>
        <Spinner>
          <button aria-label="Riga precedente"><Caret $color="#bbb" /></button>
          <button aria-label="Riga successiva"><Caret /></button>
          <button aria-label="Altre viste"><Caret /></button>
        </Spinner>
        <Big name="sketchView" lines={['Vista', 'schizzo']} w={32} />
      </GroupBody>
      <GroupName>Viste con nome</GroupName>
    </Group>
    <Group $w={129}>
      <GroupBody>
        <Big name="zoomArea" lines={['Ingrandisci', 'area']} w={46} />
        <Big name="fit" lines={['Adatta']} w={30} />
        <IconGrid $cols={3} $cell={16} $row={15}>
          <Cells names={['lens', 'cubes', 'pan', 'hand', 'orbit', 'rotate', 'spin', 'edit']} size={12} />
        </IconGrid>
      </GroupBody>
      <GroupName>Orienta</GroupName>
    </Group>
    <Group $w={309}>
      <GroupBody $gap={2}>
        <IconGrid $cols={3} $cell={24} $row={23}>
          <Cells names={['wire', 'wireDash', 'hidden', 'shaded', 'shadedEdge']} on="shadedEdge" size={17} />
        </IconGrid>
        <InnerDivider />
        <IconGrid $cols={2} $cell={17} $row={15}>
          <Cells names={['gold', 'paintCube', 'shaded', 'sphere', 'goldBlue', 'blueCube']} size={12} />
        </IconGrid>
        <IconGrid $cols={1} $cell={6} $row={15}>
          <CaretCell aria-label="Colori facce"><Caret /></CaretCell>
          <CaretCell aria-label="Nitidezza"><Caret /></CaretCell>
        </IconGrid>
        <CommandList>
          <Command><Icon name="palette" />Gestione colore</Command>
          <Command><Icon name="override" />Ridefinizioni vista</Command>
          <Command><Icon name="paint" />Pittura della parte</Command>
        </CommandList>
        <CommandList>
          <Command><Icon name="styles" />Stili</Command>
          <SelectBox $w={105} aria-label="Stile">
            <option>Predefinito</option>
          </SelectBox>
        </CommandList>
      </GroupBody>
      <GroupName>Stile</GroupName>
    </Group>
    <Group $w={122}>
      <GroupBody>
        <div>
          <ConfigRow $top={4}>
            <SelectBox $w={97} aria-label="Configurazione" disabled />
            <Icon name="floppyGrey" size={13} />
          </ConfigRow>
          <ConfigRow $top={5}>
            {['cfg1', 'cfg2', 'cfg3', 'cfg4', 'cfg5', 'cfg6', 'cfg7'].map((n) => (
              <Tool key={n} name={n} size={13} />
            ))}
          </ConfigRow>
        </div>
      </GroupBody>
      <GroupName>Configurazioni</GroupName>
    </Group>
    <Group $w={113}>
      <GroupBody>
        <Big name="windowNew" lines={['Nuova', 'finestra']} w={32} />
        <Big name="windowTile" lines={['Disponi']} w={32} caret />
        <InnerDivider />
        <Big name="windowSwap" lines={['Cambia', 'finestra']} w={38} endCaret />
      </GroupBody>
      <GroupName>Finestra</GroupName>
    </Group>
  </Ribbon>
);

const TreeNode = ({ node }) => {
  const [checked, setChecked] = useState(!node.ref);
  const id = node.name.replace(/\W/g, '-');
  return (
    <Node>
      {node.open && <Expander aria-label="Espandi" />}
      <Tick id={id} type="checkbox" checked={checked} onChange={(e) => setChecked(e.target.checked)} />
      {!node.ref && <Icon name="lock" size={12} />}
      <label htmlFor={id}>
        <Icon name={node.icon} size={13} />
        <NodeName $dim={node.ref}>{node.name}</NodeName>
      </label>
    </Node>
  );
};

const Chevron = ({ d }) => (
  <svg width="12" height="14" viewBox="0 0 12 14" aria-hidden="true">
    <path d={d} fill="none" stroke="#444" strokeWidth="2.500" />
  </svg>
);

const App = () => {
  const [distance, setDistance] = useState('193,33 mm');
  return (
    <Page>
      <GlobalStyle />
      <Gradients aria-hidden="true">
        <linearGradient id="glass" x2="1" y2="1">
          <stop stopColor="#fff" />
          <stop offset="1" stopColor="#9fdcfb" />
        </linearGradient>
      </Gradients>
      <Header>
        <AppButton aria-label="Menu applicazione"><Icon name="logo" size={17} /></AppButton>
        <TitleRow>
          <QuickAccess>
            <Tool name="new" w={14} /><Caret /><QuickDivider />
            <Tool name="open" w={14} /><Tool name="pin" size={11} w={14} /><QuickDivider />
            <Tool name="save" w={14} /><Tool name="saveAs" w={14} /><Caret /><QuickDivider />
            <Tool name="list" w={14} /><QuickDivider />
            <Tool name="door" w={14} /><QuickDivider />
            <Tool name="undo" w={14} /><Caret $color="#999" />
            <Tool name="redo" w={14} /><Caret $color="#999" /><QuickDivider />
            <Tool name="refresh" w={24} /><Caret />
          </QuickAccess>
          <Title>Sync3D - Assieme - [8A405-1496-4rev1]</Title>
        </TitleRow>
        <WindowButtons $gap={9} $end={4}>
          <Tool name="minimize" size={9} /><Tool name="restore" size={11} /><Tool name="close" size={9} />
        </WindowButtons>
        <Tabs>
          {TABS.map((tab) => (
            <Tab key={tab} $active={tab === 'Visualizza'}>{tab}</Tab>
          ))}
        </Tabs>
        <WindowButtons $gap={1} $end={0}>
          <Tool name="stackA" /><Tool name="stackB" /><Tool name="help" />
          <Tool name="minimize" size={8} w={12} /><Tool name="restore" size={8} w={12} /><Tool name="close" size={7} w={12} />
        </WindowButtons>
      </Header>
      <RibbonBar />
      <Work>
        <Rail>
          <RailButton aria-label="Livelli"><Icon name="layers" size={20} /></RailButton>
          <SensorTab>
            <Icon name="gauge" size={18} />
            <span>Sensori</span>
          </SensorTab>
          <RailButton aria-label="Libreria"><Icon name="folderHelp" size={19} /></RailButton>
        </Rail>
        <Viewport>
          <Model />
          <DimensionInput aria-label="Distanza" value={distance} onChange={(e) => setDistance(e.target.value)} />
          <EdgePanel>
            <FloatBar>
              <FloatButton $on aria-label="Seleziona piano"><Icon name="selectPlane" size={30} /></FloatButton>
              <FloatButton $grey aria-label="Copia"><Icon name="copySquares" size={24} /></FloatButton>
              <FloatButton aria-label="Aggiungi"><Icon name="addCube" size={28} /></FloatButton>
              <FloatButton $grey aria-label="Seleziona"><Icon name="selectTool" size={24} /></FloatButton>
              <FloatButton aria-label="Opzioni"><Icon name="optionList" size={23} /></FloatButton>
              {['intent', 'section', 'centre'].map((n) => (
                <SplitButton key={n} aria-label={n}>
                  <Icon name={n} size={24} />
                  <Caret $size={4} $color="#000" />
                </SplitButton>
              ))}
            </FloatBar>
            <Splitter><span /></Splitter>
            <Root>
              <Icon name="asmRoot" />
              <NodeName>8A405-1496-4rev1</NodeName>
            </Root>
            <Tree>
              {NODES.map((node) => (
                <TreeNode key={node.name} node={node} />
              ))}
            </Tree>
            <ScrollTrack>
              <button aria-label="Scorri a sinistra"><Chevron d="M9 2L3 7l6 5" /></button>
              <ScrollThumb />
              <span />
              <button aria-label="Scorri a destra"><Chevron d="M3 2l6 5-6 5" /></button>
            </ScrollTrack>
            <OrangeMark />
            <SubRow $indent={4}><Icon name="partOnly" /><NodeName $dim>V038.par:1</NodeName></SubRow>
            <SubRow $indent={23}><Icon name="ground" size={11} /><NodeName $dim>V038.par:1</NodeName></SubRow>
          </EdgePanel>
        </Viewport>
      </Work>
      <PromptBar>
        <Icon name="promptIcon" size={16} />
        <PromptName>PromptBar</PromptName>
        <PromptText>
          Fare clic sul comando 'Disegna' e creare uno schizzo chiuso di un piano (premere F3 per bloccare il piano),
          quindi fare clic sul comando 'Solidi' o selezionare una 'Regione' chiusa per creare una feature.
        </PromptText>
        <PromptTools>
          <FontButton $size={13}>A</FontButton>
          <FontButton $size={10}>A</FontButton>
          <Tool name="doubleUp" size={9} w={9} />
          <Tool name="dropBar" size={9} w={9} />
          <Tool name="pushpin" size={9} w={9} />
          <Tool name="closeSmall" size={9} w={12} />
        </PromptTools>
      </PromptBar>
      <StatusBar>
        <Selected>0 oggetti sono selezionati</Selected>
        <FindInput aria-label="Trova comando" placeholder="Trova comando" />
        {['go', 'zoomArea', 'lens', 'fit', 'hand', 'greenCube', 'moveCube', 'sheet', 'overlap'].map((n) => (
          <Tool key={n} name={n} />
        ))}
        <Tool name="minus" size={11} w={11} />
        <ZoomRange type="range" aria-label="Zoom" defaultValue="43" />
        <Tool name="plus" size={11} w={11} />
        <Tool name="record" />
        <Tool name="upload" />
      </StatusBar>
      <Taskbar>
        <TaskButton aria-label="Start"><Icon name="windows" size={13} /></TaskButton>
        <TaskSearch>
          <Icon name="search" size={13} />
          <input aria-label="Cerca" placeholder="Scrivi qui per eseguire la ricerca" />
        </TaskSearch>
        <TaskButton aria-label="Cortana"><Icon name="cortana" size={12} /></TaskButton>
        <TaskButton aria-label="Visualizzazione attività"><Icon name="taskView" size={13} /></TaskButton>
        <TaskButton $on aria-label="Sync3D"><Icon name="logo" size={14} /></TaskButton>
        <Tray>
          <Icon name="chevronUp" size={13} />
          <Icon name="cloud" size={13} />
          <Icon name="network" size={13} />
          <Icon name="speaker" size={13} />
          <Language>ITA</Language>
          <Clock>14:12<br />13/11/2020</Clock>
          <NoteButton aria-label="Notifiche">
            <Icon name="notes" size={15} />
            <Badge>1</Badge>
          </NoteButton>
        </Tray>
      </Taskbar>
      <Pointer width="10" height="14" viewBox="0 0 10 14" aria-hidden="true">
        <path d="M1 1v11l3-3 2 4 2-1-2-4h3z" fill="#111" stroke="#fff" strokeWidth=".8" />
      </Pointer>
    </Page>
  );
};

export default App;
